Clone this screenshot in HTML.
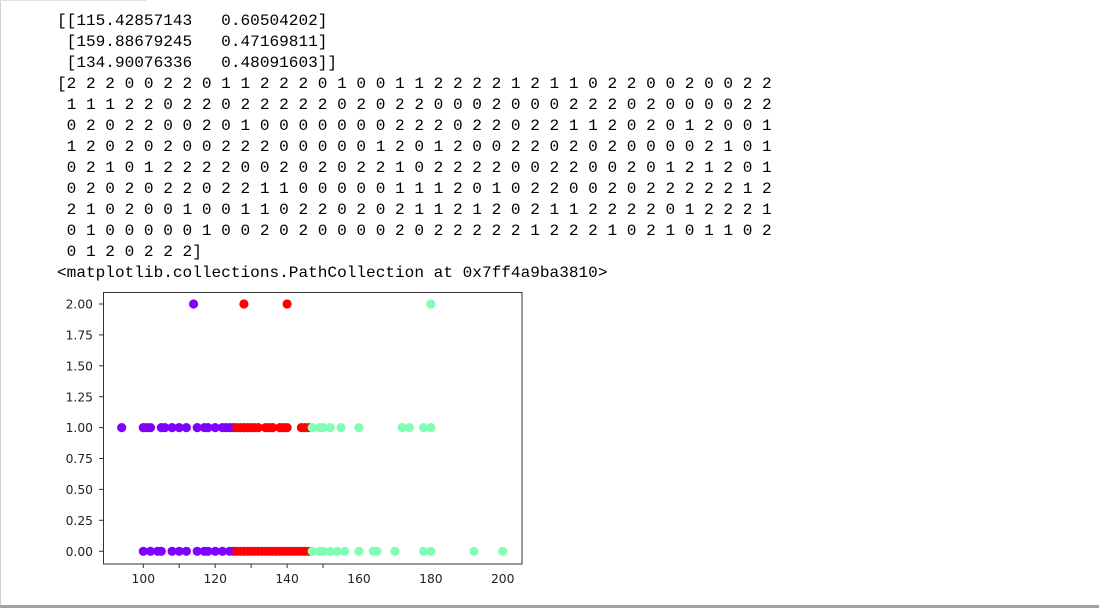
<!DOCTYPE html>
<html><head><meta charset="utf-8"><style>
html,body{margin:0;padding:0;background:#fff;width:1099px;height:608px;overflow:hidden;position:relative}
#lb{position:absolute;left:0;top:0;width:1px;height:606px;background:#d0d0d0}
#tb{position:absolute;left:0;top:0;width:146px;height:1px;background:#e0e0e0}
#bb{position:absolute;left:0;top:605px;width:1099px;height:3px;background:#a3a3a3}
pre{position:absolute;left:57px;top:11px;margin:0;font-family:"Liberation Mono",monospace;font-size:16.1px;line-height:21px;color:#000}
svg{position:absolute;left:0;top:0}
text{font-family:"DejaVu Sans","Liberation Sans",sans-serif;font-size:12.3px;fill:#222}
</style></head><body>
<div id="lb"></div><div id="tb"></div><div id="bb"></div>
<pre>[[115.42857143   0.60504202]
 [159.88679245   0.47169811]
 [134.90076336   0.48091603]]
[2 2 2 0 0 2 2 0 1 1 2 2 2 0 1 0 0 1 1 2 2 2 2 1 2 1 1 0 2 2 0 0 2 0 0 2 2
 1 1 1 2 2 0 2 2 0 2 2 2 2 2 0 2 0 2 2 0 0 0 2 0 0 0 2 2 2 0 2 0 0 0 0 2 2
 0 2 0 2 2 0 0 2 0 1 0 0 0 0 0 0 0 2 2 2 0 2 2 0 2 2 1 1 2 0 2 0 1 2 0 0 1
 1 2 0 2 0 2 0 0 2 2 2 0 0 0 0 0 1 2 0 1 2 0 0 2 2 0 2 0 2 0 0 0 0 2 1 0 1
 0 2 1 0 1 2 2 2 2 0 0 2 0 2 0 2 2 1 0 2 2 2 2 0 0 2 2 0 0 2 0 1 2 1 2 0 1
 0 2 0 2 0 2 2 0 2 2 1 1 0 0 0 0 0 1 1 1 2 0 1 0 2 2 0 0 2 0 2 2 2 2 2 1 2
 2 1 0 2 0 0 1 0 0 1 1 0 2 2 0 2 0 2 1 1 2 1 2 0 2 1 1 2 2 2 2 0 1 2 2 2 1
 0 1 0 0 0 0 0 1 0 0 2 0 2 0 0 0 0 2 0 2 2 2 2 2 1 2 2 2 1 0 2 1 0 1 1 0 2
 0 1 2 0 2 2 2]
&lt;matplotlib.collections.PathCollection at 0x7ff4a9ba3810&gt;</pre>
<svg id="s" width="1099" height="608" xmlns="http://www.w3.org/2000/svg">
<g id="pts"></g>
<rect x="103.5" y="292.5" width="418.5" height="271.5" fill="none" stroke="#333" stroke-width="1"/>
<g stroke="#333" stroke-width="1">
<line x1="99" y1="304" x2="103" y2="304"/><line x1="99" y1="334.9" x2="103" y2="334.9"/>
<line x1="99" y1="365.8" x2="103" y2="365.8"/><line x1="99" y1="396.7" x2="103" y2="396.7"/>
<line x1="99" y1="427.6" x2="103" y2="427.6"/><line x1="99" y1="458.5" x2="103" y2="458.5"/>
<line x1="99" y1="489.4" x2="103" y2="489.4"/><line x1="99" y1="520.3" x2="103" y2="520.3"/>
<line x1="99" y1="551.3" x2="103" y2="551.3"/>
<line x1="143.3" y1="564" x2="143.3" y2="568"/><line x1="179.2" y1="564" x2="179.2" y2="568"/>
<line x1="215.2" y1="564" x2="215.2" y2="568"/><line x1="251.1" y1="564" x2="251.1" y2="568"/>
<line x1="287.1" y1="564" x2="287.1" y2="568"/><line x1="323" y1="564" x2="323" y2="568"/>
</g>
<g text-anchor="end">
<text x="93" y="308.5">2.00</text><text x="93" y="339.5">1.75</text><text x="93" y="370.5">1.50</text>
<text x="93" y="401.5">1.25</text><text x="93" y="432">1.00</text><text x="93" y="463">0.75</text>
<text x="93" y="494">0.50</text><text x="93" y="525">0.25</text><text x="93" y="556">0.00</text>
</g>
<g text-anchor="middle">
<text x="143.3" y="583">100</text><text x="215.2" y="583">120</text><text x="287.1" y="583">140</text>
<text x="359" y="583">160</text><text x="430.9" y="583">180</text><text x="502.7" y="583">200</text>
</g>
</svg>
<script>
var P='#8000ff',R='#ff0000',G='#80ffb4';
var d=[
[1,P,[94,100,101,102,105,106,108,110,112,115,117,118,120,122,123,124,125]],
[1,R,[126,127,128,129,130,131,132,134,135,136,138,139,140,144,145,146]],
[1,G,[147,149,150,152,155,160,172,174,178,180]],
[0,P,[100,102,104,105,108,110,112,115,117,118,120,122,124,125]],
[0,R,[126,127,128,129,130,131,132,133,134,135,136,137,138,139,140,141,142,143,144,145,146]],
[0,G,[147,149,150,152,154,156,160,164,165,170,178,180,192,200]],
[2,P,[114]],[2,R,[128,140]],[2,G,[180]]];
var s='';
d.forEach(function(g){g[2].forEach(function(v){
var x=143.3+(v-100)*3.594,y=551.3-g[0]*123.65;
s+='<circle cx="'+x.toFixed(1)+'" cy="'+y.toFixed(1)+'" r="4.6" fill="'+g[1]+'"/>';});});
document.getElementById('pts').innerHTML=s;
</script>
</body></html>
